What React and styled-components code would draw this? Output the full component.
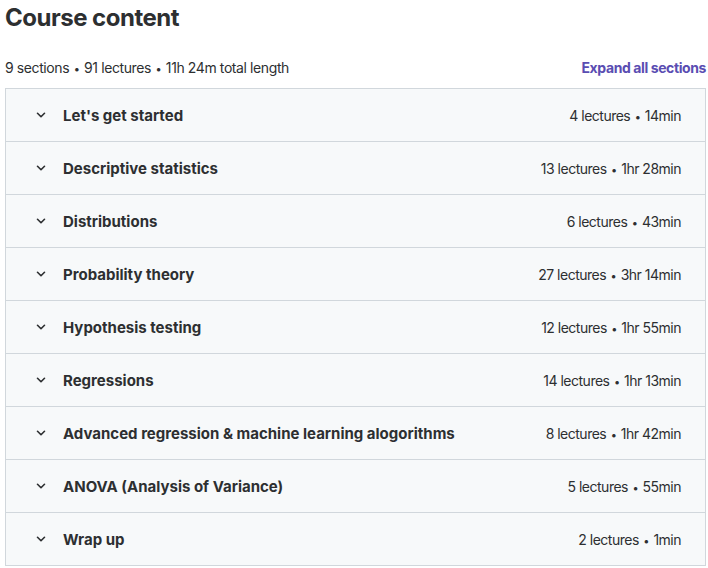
import styled, { createGlobalStyle } from "styled-components";

const GlobalStyle = createGlobalStyle`
  body {
    margin: 0;
    font-family: Inter, "Noto Sans", sans-serif;
    color: #2d2f31;
    background: #fff;
  }
`;

const Wrapper = styled.div`
  width: 701px;
  padding: 4px 0 0 5px;
`;

const Title = styled.h2`
  margin: 0;
  font-size: 24px;
  font-weight: 700;
  line-height: 28px;
  letter-spacing: -0.5px;
  color: #2d2f31;
`;

const SummaryRow = styled.div`
  display: flex;
  justify-content: space-between;
  align-items: center;
  margin-top: 23px;
  height: 24px;
  margin-bottom: 9px;
`;

const Summary = styled.span`
  font-size: 14px;
  letter-spacing: -0.4px;
  color: #2d2f31;
`;

const ExpandLink = styled.button`
  border: none;
  background: none;
  padding: 0;
  font-family: inherit;
  font-size: 14px;
  font-weight: 700;
  letter-spacing: -0.4px;
  color: #5a4db2;
  cursor: pointer;
`;

const List = styled.div`
  border: 1px solid #d1d7dc;
  display: flex;
  flex-direction: column;
`;

const Section = styled.div`
  display: flex;
  align-items: center;
  height: 52px;
  padding: 0 24px 0 28px;
  background: #f7f9fa;
  border-top: ${(p) => (p.$first ? "none" : "1px solid #d1d7dc")};
`;

const Chevron = styled.svg`
  width: 14px;
  height: 14px;
  margin-right: 15px;
  flex-shrink: 0;
`;

const SectionTitle = styled.span`
  flex: 1;
  font-size: 15px;
  font-weight: 700;
  color: #2d2f31;
`;

const SectionMeta = styled.span`
  font-size: 14px;
  letter-spacing: -0.5px;
  color: #2d2f31;
`;

const Dot = styled.span`
  font-size: 11px;
  margin: 0 1px;
`;

const sections = [
  ["Let's get started", "4 lectures", "14min"],
  ["Descriptive statistics", "13 lectures", "1hr 28min"],
  ["Distributions", "6 lectures", "43min"],
  ["Probability theory", "27 lectures", "3hr 14min"],
  ["Hypothesis testing", "12 lectures", "1hr 55min"],
  ["Regressions", "14 lectures", "1hr 13min"],
  ["Advanced regression & machine learning alogorithms", "8 lectures", "1hr 42min"],
  ["ANOVA (Analysis of Variance)", "5 lectures", "55min"],
  ["Wrap up", "2 lectures", "1min"],
];

const App = () => (
  <>
    <GlobalStyle />
    <Wrapper>
      <Title>Course content</Title>
      <SummaryRow>
        <Summary>
          9 sections <Dot>•</Dot> 91 lectures <Dot>•</Dot> 11h 24m total length
        </Summary>
        <ExpandLink>Expand all sections</ExpandLink>
      </SummaryRow>
      <List>
        {sections.map(([name, count, length], i) => (
          <Section key={name} $first={i === 0}>
            <Chevron viewBox="0 0 24 24">
              <path
                d="M6 9l6 6 6-6"
                fill="none"
                stroke="#2d2f31"
                strokeWidth="2.8"
                strokeLinecap="round"
                strokeLinejoin="round"
              />
            </Chevron>
            <SectionTitle>{name}</SectionTitle>
            <SectionMeta>
              {count} <Dot>•</Dot> {length}
            </SectionMeta>
          </Section>
        ))}
      </List>
    </Wrapper>
  </>
);

export default App;
